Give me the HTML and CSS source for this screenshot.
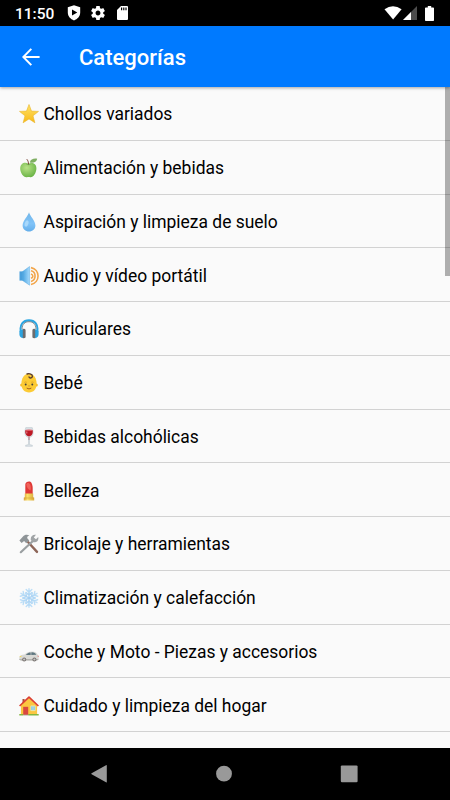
FILE: index.html
```html
<!DOCTYPE html>
<html lang="es">
<head>
    <meta charset="UTF-8">
    <meta name="viewport" content="width=device-width, initial-scale=1.0">
    <title>Categorías</title>
    <link rel="stylesheet" href="styles.css">
</head>
<body>
    <div class="status-bar">
        <span class="clock">11:50</span>
        <svg class="status-shield" width="14" height="16" viewBox="0 0 14 16">
            <path fill="#fff" fill-rule="evenodd" d="M7 0.3 L13.2 2.3 V7.6 C13.2 11.3 10.5 14.4 7 15.4 C3.5 14.4 .8 11.3 .8 7.6 V2.3 Z M5 4.6 V10.6 L10.3 7.6 Z"/>
        </svg>
        <svg class="status-gear" width="16" height="16" viewBox="2 2 20 20">
            <path fill="#fff" d="M19.43 12.98c.04-.32.07-.64.07-.98s-.03-.66-.07-.98l2.11-1.65c.19-.15.24-.42.12-.64l-2-3.46c-.12-.22-.39-.3-.61-.22l-2.49 1c-.52-.4-1.08-.73-1.69-.98l-.38-2.65C14.46 2.18 14.25 2 14 2h-4c-.25 0-.46.18-.49.42l-.38 2.65c-.61.25-1.17.59-1.69.98l-2.49-1c-.23-.09-.49 0-.61.22l-2 3.46c-.13.22-.07.49.12.64l2.11 1.65c-.04.32-.07.65-.07.98s.03.66.07.98l-2.11 1.65c-.19.15-.24.42-.12.64l2 3.46c.12.22.39.3.61.22l2.49-1c.52.4 1.08.73 1.69.98l.38 2.65c.03.24.24.42.49.42h4c.25 0 .46-.18.49-.42l.38-2.65c.61-.25 1.17-.59 1.69-.98l2.49 1c.23.09.49 0 .61-.22l2-3.46c.12-.22.07-.49-.12-.64l-2.11-1.65zM12 15.5c-1.93 0-3.5-1.57-3.5-3.5s1.57-3.5 3.5-3.5 3.5 1.57 3.5 3.5-1.57 3.5-3.5 3.5z"/>
        </svg>
        <svg class="status-card" width="11" height="14" viewBox="0 0 11 14">
            <path fill="#fff" fill-rule="evenodd" d="M4 0 H10 Q11 0 11 1 V13 Q11 14 10 14 H1 Q0 14 0 13 V4 Z M4 1.6 V4.2 H5.2 V1.6 Z M6.2 1.6 V4.2 H7.4 V1.6 Z M8.4 1.6 V4.2 H9.6 V1.6 Z"/>
        </svg>
        <div class="signals">
            <svg width="18" height="14" viewBox="0 0 18 14">
                <path fill="#fff" d="M0.5 3.2 Q9 -2.8 17.6 3.2 L9.1 13.6 Z"/>
            </svg>
            <svg width="14" height="14" viewBox="0 0 14 14">
                <path fill="#4d4d4d" d="M14 0 V14 H0 Z"/>
                <path fill="#fff" d="M8 6 V14 H0 Z"/>
            </svg>
            <svg class="battery" width="9" height="15" viewBox="0 0 9 15">
                <path fill="#fff" d="M2.8 0 H6.2 V1.4 H8.2 Q9 1.4 9 2.2 V14.2 Q9 15 8.2 15 H0.8 Q0 15 0 14.2 V2.2 Q0 1.4 0.8 1.4 H2.8 Z"/>
            </svg>
        </div>
    </div>

    <div class="toolbar">
        <svg class="back" width="18" height="18" viewBox="0 0 18 18">
            <path fill="none" stroke="#fff" stroke-width="2" d="M17.6 9 H1.6 M9.3 0.9 L1.3 9 L9.3 17.1"/>
        </svg>
        <h1>Categorías</h1>
    </div>

    <div class="content">
        <ul class="categories">
            <li>
                <svg class="icon" viewBox="0 0 20 20">
                    <defs><linearGradient id="star" x1="0" y1="0" x2="0" y2="1"><stop offset="0" stop-color="#ffe36a"/><stop offset="1" stop-color="#f8b916"/></linearGradient></defs>
                    <path fill="url(#star)" stroke="#e9b52b" stroke-width=".6" stroke-linejoin="round" d="M10 .5 L12.5 7.1 L19.5 7.4 L14 11.8 L15.9 18.8 L10 14.9 L4.1 18.8 L6 11.8 L.5 7.4 L7.5 7.1 Z"/>
                </svg>
                <span>Chollos variados</span>
            </li>
            <li>
                <svg class="icon" viewBox="0 0 20 20">
                    <defs><radialGradient id="apple" cx=".4" cy=".35" r=".7"><stop offset="0" stop-color="#b8e287"/><stop offset="1" stop-color="#68b244"/></radialGradient></defs>
                    <path fill="url(#apple)" d="M9.5 5.8 C12 4.2 17.4 4.4 17.4 10.2 C17.4 15 14 19.6 11.4 19.2 C10 18.8 9.2 18.8 8 19.2 C4.6 19.8 1.2 15 1.2 10.6 C1.2 4.8 6.4 3.6 9.5 5.8 Z"/>
                    <path fill="#7fae62" d="M10.8 4.4 C11.5 1.2 14.5 .2 18.2 .7 C17.6 3.8 14.2 5.6 10.8 4.4 Z"/>
                    <path fill="none" stroke="#7b4035" stroke-width="1" d="M9.5 6.6 C9.5 4 9 2.6 7.8 1.2"/>
                    <path fill="none" stroke="#5c9c42" stroke-width=".6" d="M7.4 6.1 Q9.4 7.2 11.6 6"/>
                </svg>
                <span>Alimentación y bebidas</span>
            </li>
            <li>
                <svg class="icon" viewBox="0 0 20 20">
                    <defs><linearGradient id="drop" x1="0" y1="0" x2="0" y2="1"><stop offset="0" stop-color="#72b6e8"/><stop offset=".6" stop-color="#80c3f8"/><stop offset="1" stop-color="#64aeea"/></linearGradient></defs>
                    <path fill="url(#drop)" d="M10 .3 C11 4.2 16.4 8.8 16.4 13.4 C16.4 17 13.6 19.4 10 19.4 C6.4 19.4 3.6 17 3.6 13.4 C3.6 8.8 9 4.2 10 .3 Z"/>
                    <ellipse cx="7.6" cy="11.5" rx="1.8" ry="3.2" fill="#a8d8fb" transform="rotate(18 7.6 11.5)"/>
                </svg>
                <span>Aspiración y limpieza de suelo</span>
            </li>
            <li>
                <svg class="icon" viewBox="0 0 20 20">
                    <defs><linearGradient id="cone"><stop offset="0" stop-color="#4aa3e0"/><stop offset="1" stop-color="#a5dafd"/></linearGradient></defs>
                    <path fill="#4ba0dc" d="M.5 5.4 H5 V14.6 H.5 Z"/>
                    <path fill="url(#cone)" stroke="#5cabe0" stroke-width=".5" d="M3.6 5.6 L10.6 .5 V19.2 L3.6 14.5 Z"/>
                    <path fill="none" stroke="#f2a54a" stroke-width="1.6" d="M12 1.6 C21.4 3.6 21.4 16.6 12 18.5 M12 4.8 C17.4 6 17.4 14 12 15.4 M12 7.9 C14.5 8.8 14.5 11.5 12 12.3"/>
                </svg>
                <span>Audio y vídeo portátil</span>
            </li>
            <li>
                <svg class="icon" viewBox="0 0 20 20">
                    <path fill="none" stroke="#2aa5e2" stroke-width="1.9" d="M1.9 13 C.2 5.4 4.2 1.3 10 1.3 C15.8 1.3 19.8 5.4 18.1 13"/>
                    <path fill="none" stroke="#626b71" stroke-width=".8" d="M3 10 C3.2 5 6 2.7 10 2.7 C14 2.7 16.8 5 17 10"/>
                    <path fill="#2ba3e0" d="M.4 12 Q1.2 10.2 4 10.2 V19 Q.7 18.6 .4 15.5 Z M19.6 12 Q18.8 10.2 16 10.2 V19 Q19.3 18.6 19.6 15.5 Z"/>
                    <path fill="#6c6c6e" d="M3.8 9.9 Q6.6 9.6 6.6 11.2 V18.2 Q6.6 19.4 3.8 19.3 Z M16.2 9.9 Q13.4 9.6 13.4 11.2 V18.2 Q13.4 19.4 16.2 19.3 Z"/>
                </svg>
                <span>Auriculares</span>
            </li>
            <li>
                <svg class="icon" viewBox="0 0 20 20">
                    <circle cx="2.7" cy="12" r="1.5" fill="#f4b41e"/>
                    <circle cx="17.3" cy="12" r="1.5" fill="#f4b41e"/>
                    <path fill="#fccb35" d="M10 .8 C15 .8 17.6 5.2 17.6 11 C17.6 16.4 14.4 19.4 10 19.4 C5.6 19.4 2.4 16.4 2.4 11 C2.4 5.2 5 .8 10 .8 Z"/>
                    <path fill="none" stroke="#543930" stroke-width="1.3" stroke-linecap="round" d="M8 1 C10.5 .3 13.6 1 13.4 3.4 C13.2 5.5 10 5.4 10 3.8"/>
                    <circle cx="6.7" cy="11.5" r=".95" fill="#404040"/>
                    <circle cx="13.3" cy="11.5" r=".95" fill="#404040"/>
                    <path fill="none" stroke="#c98a22" stroke-width=".6" stroke-linecap="round" d="M5.7 9.2 Q6.6 8.6 7.5 9.1 M12.5 9.1 Q13.4 8.6 14.3 9.2 M9.3 13 Q10 13.5 10.7 13"/>
                    <path fill="none" stroke="#9b521c" stroke-width=".9" stroke-linecap="round" d="M8 15.3 Q10 16.8 12 15.3"/>
                </svg>
                <span>Bebé</span>
            </li>
            <li>
                <svg class="icon" viewBox="0 0 20 20">
                    <path fill="#dbe2e6" stroke="#b5c1c9" stroke-width=".5" d="M6.8 .6 H13.2 C15 6 14.2 9.5 10.5 10.4 V17.5 L13.4 18.3 V19.3 H6.6 V18.3 L9.5 17.5 V10.4 C5.8 9.5 5 6 6.8 .6 Z"/>
                    <path fill="#bd1824" d="M6.3 3.2 H13.7 C14.1 6.8 12.8 9.2 10 9.2 C7.2 9.2 5.9 6.8 6.3 3.2 Z"/>
                    <ellipse cx="10" cy="3.3" rx="3.7" ry=".8" fill="#df5b64"/>
                    <path fill="#a84450" d="M9.7 9.5 H10.3 V13 H9.7 Z"/>
                    <path fill="#e58389" d="M7.2 4.6 H8.3 V6.6 H7.4 Z"/>
                </svg>
                <span>Bebidas alcohólicas</span>
            </li>
            <li>
                <svg class="icon" viewBox="0 0 20 20">
                    <defs><linearGradient id="gold"><stop offset="0" stop-color="#d9a336"/><stop offset=".35" stop-color="#fbe169"/><stop offset="1" stop-color="#d8a93a"/></linearGradient></defs>
                    <path fill="#df3836" d="M6.3 13 V3.5 C6.3 1 9.5 .1 11.4 .8 C13 1.8 13.7 5 13.7 7 V13 Z"/>
                    <path fill="#f0625a" d="M7.3 3.5 C8 1.4 10.4 1.6 11.3 3.8 C12 6.5 12 8 11.4 9.5 C9.4 8.6 7.5 6.5 7.3 3.5 Z"/>
                    <path fill="url(#gold)" d="M5.8 12.6 H14.2 V16.6 H15.2 V19.4 H4.8 V16.6 H5.8 Z"/>
                    <path fill="none" stroke="#ca9429" stroke-width=".5" d="M5 17 H15"/>
                </svg>
                <span>Belleza</span>
            </li>
            <li>
                <svg class="icon" viewBox="0 0 20 20">
                    <path fill="none" stroke="#8d6558" stroke-width="2.4" stroke-linecap="round" d="M9.2 8.3 L18 17.9"/>
                    <path fill="none" stroke="#9a9fa1" stroke-width="2.2" stroke-linecap="round" d="M14.7 6.2 L1.8 18.2"/>
                    <path fill="#a0a4a6" d="M17 .8 L14.8 3.4 L17 5.3 L19.2 3 C20.2 7 17.2 9.3 13.7 8 L11.8 6 C11.2 2.7 13.6 .2 17 .8 Z"/>
                    <path fill="#8f9598" d="M.4 6.6 L4 2.4 C5.5 .6 8.4 .4 10.4 1.5 C8.6 2 8 3 8.3 4.2 L10.3 6.4 L7.2 9.2 L5.1 6.9 L2.6 9 Z"/>
                </svg>
                <span>Bricolaje y herramientas</span>
            </li>
            <li>
                <svg class="icon" viewBox="0 0 20 20">
                    <defs>
                        <linearGradient id="ice" gradientUnits="userSpaceOnUse" x1="0" y1="0" x2="0" y2="20"><stop offset="0" stop-color="#c1e1f8"/><stop offset="1" stop-color="#86bdec"/></linearGradient>
                        <path id="arm" d="M10 10 L10.01 .7 M7.2 1.6 L10 4.2 L12.8 1.6 M7.2 4.6 L10 7.2 L12.8 4.6"/>
                    </defs>
                    <g fill="none" stroke="url(#ice)" stroke-width="1.4" stroke-linecap="round">
                        <use href="#arm"/>
                        <use href="#arm" transform="rotate(60 10 10)"/>
                        <use href="#arm" transform="rotate(120 10 10)"/>
                        <use href="#arm" transform="rotate(180 10 10)"/>
                        <use href="#arm" transform="rotate(240 10 10)"/>
                        <use href="#arm" transform="rotate(300 10 10)"/>
                    </g>
                </svg>
                <span>Climatización y calefacción</span>
            </li>
            <li>
                <svg class="icon" viewBox="0 0 20 20">
                    <path fill="#d9d9d5" d="M.3 15.4 C.4 13.6 2.5 12.9 5.5 12.6 C8 10.4 10 9.6 13 9.6 C16 9.6 17.6 10.8 18.8 12.8 L19.7 13.8 V17.2 L18 18.4 H2 L.3 17.8 Z"/>
                    <path fill="#5f7780" d="M6.8 12.9 C8.5 10.9 10 10.4 11.7 10.4 V13 Z M12.3 10.4 C15 10.2 16.6 11.1 17.3 12.8 L12.3 13 Z"/>
                    <path fill="#b4b3b0" d="M.3 16.9 H19.7 V17.3 L18 18.4 H2 L.3 17.8 Z"/>
                    <circle cx="5.2" cy="17.5" r="2" fill="#77716e"/>
                    <circle cx="5.2" cy="17.5" r="1.1" fill="#c6c6c6"/>
                    <circle cx="15.4" cy="17.5" r="2" fill="#77716e"/>
                    <circle cx="15.4" cy="17.5" r="1.1" fill="#c6c6c6"/>
                    <path fill="#f5db51" d="M.8 14.2 L2.6 13.8 L2.2 15.1 H.6 Z"/>
                    <path fill="#df7572" d="M18.6 13.3 L19.6 13.9 V15 H18.8 Z"/>
                </svg>
                <span>Coche y Moto - Piezas y accesorios</span>
            </li>
            <li>
                <svg class="icon" viewBox="0 0 20 20">
                    <path fill="#a7513f" d="M3.5 3 H5.6 V8 H3.5 Z"/>
                    <path fill="#fbc640" d="M1.9 9.2 L10 2 L18.1 9.2 V19 H1.9 Z"/>
                    <path fill="none" stroke="#dc3f30" stroke-width="1.7" stroke-linejoin="round" d="M.6 10 L10 1.2 L19.4 10"/>
                    <path fill="#d8473f" d="M4.2 10.8 H9.2 V19 H4.2 Z"/>
                    <path fill="#79c7f2" stroke="#fff0ae" stroke-width=".7" d="M11.8 9.9 H16.2 V14.6 H11.8 Z"/>
                    <path fill="none" stroke="#fff0ae" stroke-width=".6" d="M14 9.9 V14.6"/>
                    <path fill="#84b53f" d="M.3 18 H4.2 V19.5 H.3 Z M9.2 18 H19.7 V19.5 H9.2 Z"/>
                    <path fill="#b4aaa2" d="M4.2 18.7 H9.2 V19.5 H4.2 Z"/>
                </svg>
                <span>Cuidado y limpieza del hogar</span>
            </li>
        </ul>
        <div class="scrollbar"></div>
    </div>

    <div class="nav-bar">
        <svg width="18" height="20" viewBox="0 0 18 20">
            <path fill="#999" d="M16 1.2 Q16.8 .7 16.8 1.5 V18 Q16.8 18.8 16 18.3 L1.6 10.2 Q.8 9.7 1.6 9.2 Z"/>
        </svg>
        <svg width="18" height="18" viewBox="0 0 18 18">
            <circle cx="9" cy="8.7" r="7.9" fill="#999"/>
        </svg>
        <svg width="18" height="18" viewBox="0 0 18 18">
            <rect x=".8" y=".4" width="16.8" height="16.8" rx="1.2" fill="#999"/>
        </svg>
    </div>
</body>
</html>
```
FILE: styles.css
```css
* {
    margin: 0;
    padding: 0;
    box-sizing: border-box;
}

body {
    font-family: Roboto, 'Liberation Sans', sans-serif;
    background: #fafafa;
    height: 100vh;
    display: flex;
    flex-direction: column;
    overflow: hidden;
}

svg {
    display: block;
    flex-shrink: 0;
}

.status-bar {
    height: 26px;
    flex-shrink: 0;
    display: flex;
    align-items: center;
    padding: 0 16px 0 15px;
    background: #000;
    color: #fff;
}

.clock {
    width: 52px;
    font-size: 15.5px;
    font-weight: 500;
    line-height: 26px;
    padding-top: 2px;
}

.status-gear {
    width: 14px;
    height: 14px;
    margin-left: 10px;
}

.status-card {
    margin-left: 12px;
}

.signals {
    display: flex;
    align-items: center;
    gap: 1px;
    margin-left: auto;
}

.battery {
    margin-left: 7px;
}

.toolbar {
    height: 61px;
    flex-shrink: 0;
    display: flex;
    align-items: center;
    padding: 0 22px;
    background: #007aff;
    color: #fff;
    box-shadow: 0 1px 3px rgba(0, 0, 0, 0.35);
    z-index: 1;
}

.toolbar h1 {
    margin-left: 39px;
    padding-top: 2px;
    font-size: 22px;
    font-weight: 500;
}

.content {
    position: relative;
    flex: 1;
    overflow: hidden;
}

.categories {
    list-style: none;
}

.categories li {
    height: 53.75px;
    display: flex;
    align-items: center;
    padding: 2px 0 0 18.5px;
    border-bottom: 1px solid #d2d2d2;
    color: #000;
    font-size: 17.45px;
}

.icon {
    width: 20px;
    height: 20px;
    margin-right: 5px;
}

/* overlays the right edge of the list */
.scrollbar {
    position: absolute;
    top: 0;
    right: 0;
    width: 5px;
    height: 189px;
    background: rgba(0, 0, 0, 0.3);
}

.nav-bar {
    height: 52px;
    flex-shrink: 0;
    display: flex;
    align-items: center;
    justify-content: space-between;
    padding: 0 92px 0 90px;
    background: #000;
}
```
